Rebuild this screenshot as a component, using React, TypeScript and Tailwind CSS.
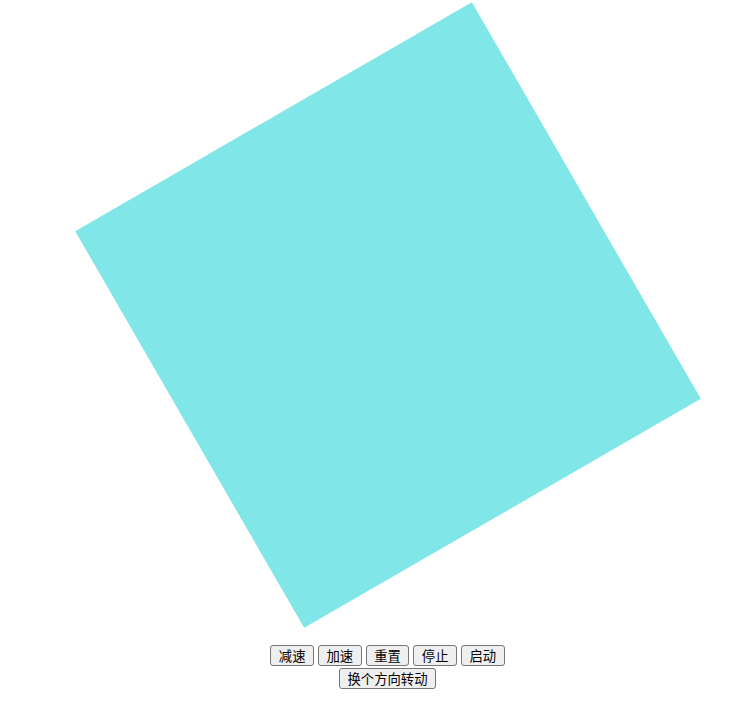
const buttons = ["减速", "加速", "重置", "停止", "启动", "换个方向转动"];

const App = () => {
  return (
    <div className="min-h-screen bg-white pl-[38px] flex flex-col items-center">
      <div className="mt-[86px] w-[458px] h-[458px] bg-[#80e6e8] rotate-[-30deg]" />
      <div className="mt-[101px] w-[240px] flex flex-wrap justify-center gap-x-[4px] gap-y-[2px]">
        {buttons.map((label) => (
          <button
            key={label}
            className="h-[21px] px-[7.5px] text-[13.33px] leading-[17px] text-black bg-[#efefef] border border-[#767676] rounded-[3px] font-['Noto_Sans_CJK_SC',sans-serif]"
          >
            {label}
          </button>
        ))}
      </div>
    </div>
  );
};

export default App;
